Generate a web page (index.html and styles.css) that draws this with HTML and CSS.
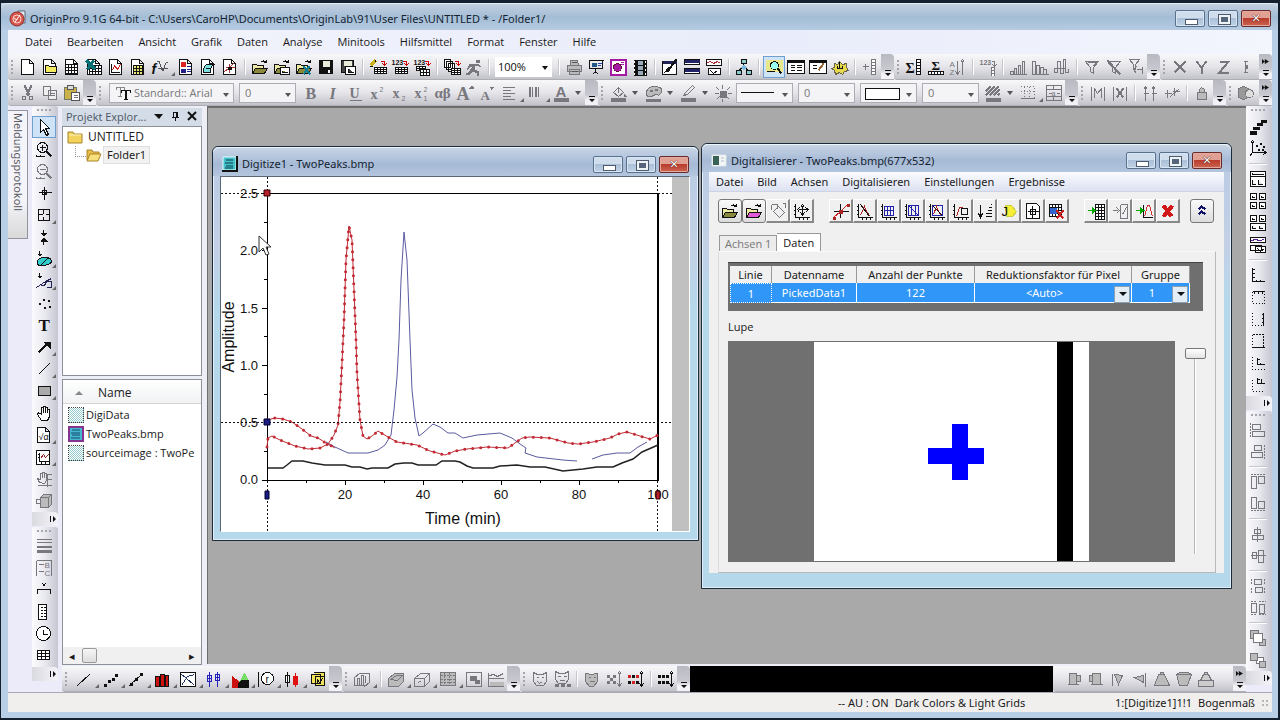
FILE: index.html
```html
<!DOCTYPE html>
<html lang="de">
<head>
    <meta charset="UTF-8">
    <meta name="viewport" content="width=device-width, initial-scale=1.0">
    <title>OriginPro 9.1G 64-bit</title>
    <link rel="stylesheet" href="styles.css">
</head>
<body>
<div class="app">
    <header class="titlebar">
        <svg class="app-logo" viewBox="0 0 17 17"><path d="M9 1h7v12h-7z" fill="#e8eef5" stroke="#567"/><circle cx="8" cy="9" r="7" fill="#d9574c" stroke="#8c2b28"/><circle cx="8" cy="9" r="4" fill="none" stroke="#f6d5cf"/><path d="M6 12L11 5M5 8l3 2" stroke="#fff" fill="none"/></svg>
        <h1>OriginPro 9.1G 64-bit - C:\Users\CaroHP\Documents\OriginLab\91\User Files\UNTITLED * - /Folder1/</h1>
        <div class="caption">
            <button class="min" aria-label="Minimieren"></button>
            <button class="max" aria-label="Maximieren"></button>
            <button class="close" aria-label="Schließen"></button>
        </div>
    </header>

    <nav class="menubar">
        <button>Datei</button><button>Bearbeiten</button><button>Ansicht</button><button>Grafik</button><button>Daten</button><button>Analyse</button><button>Minitools</button><button>Hilfsmittel</button><button>Format</button><button>Fenster</button><button>Hilfe</button>
    </nav>

    <div class="toolrow">
        <div class="toolbar">
            <span class="tools" data-tools="new newfolder book excel graph matrix func> layout notes chartpage | open opentpl openxl save savetpl | wizard import1 import2 | batch ~run |"></span>
            <label class="combo zoom"><select aria-label="Zoom"><option>100%</option></select></label>
            <span class="tools" data-tools="| ~print present slide film | brush stripes panes | tree | find! list edit gear | ~addcol"></span>
            <button class="endcap" aria-label="Weitere Schaltflächen"></button>
        </div>
        <div class="toolbar">
            <span class="tools" data-tools="sumcol sumrow ~sort | ~numcol | ~barsup ~bars ~barsmid | ~funnel ~funnelx ~funnelgo"></span>
            <button class="endcap" aria-label="Weitere Schaltflächen"></button>
        </div>
        <div class="toolbar grow">
            <span class="tools" data-tools="~setx ~sety ~setz ~err"></span>
            <button class="endcap more" aria-label="Weitere Schaltflächen"></button>
        </div>
    </div>

    <div class="toolrow">
        <div class="toolbar">
            <span class="tools" data-tools="~cut ~copy paste"></span>
            <button class="endcap" aria-label="Weitere Schaltflächen"></button>
        </div>
        <div class="toolbar">
            <label class="combo font"><svg class="tt" viewBox="0 0 18 18"><path d="M2 6V3h8v3M6 3v9M4 12h4" fill="none" stroke="#888"/><path d="M7 9V6h9v3M11 6v9M10 15h4M12 6v9" fill="none" stroke="#111"/></svg><select aria-label="Schriftart" disabled><option>Standard:: Arial</option></select></label>
            <label class="combo size"><select aria-label="Schriftgröße" disabled><option>0</option></select></label>
            <span class="tools" data-tools="~bold ~italic ~under ~sup ~sub ~supsub ~greek ~bigger ~smaller ~align> ~hatchv> ~fontcol v"></span>
            <button class="endcap" aria-label="Weitere Schaltflächen"></button>
        </div>
        <div class="toolbar">
            <span class="tools" data-tools="~fill v ~palette v ~linecol v ~light"></span>
            <label class="combo line"><select aria-label="Linienart" disabled><option label=" "></option></select></label>
            <label class="combo"><select aria-label="Linienbreite" disabled><option>0</option></select></label>
            <label class="combo box"><select aria-label="Füllung" disabled><option label=" "></option></select></label>
            <label class="combo last"><select aria-label="Musterbreite" disabled><option>0</option></select></label>
            <span class="tools" data-tools="~hatch v ~border> ~merge"></span>
            <button class="endcap" aria-label="Weitere Schaltflächen"></button>
        </div>
        <div class="toolbar">
            <span class="tools" data-tools="~mask ~unmask | ~spread ~swap | ~lock"></span>
            <button class="endcap" aria-label="Weitere Schaltflächen"></button>
        </div>
        <div class="toolbar grow">
            <span class="tools" data-tools="~cubefind"></span>
            <button class="endcap more" aria-label="Weitere Schaltflächen"></button>
        </div>
    </div>

    <div class="workspace">
        <div class="dock"><button>Meldungsprotokoll</button></div>
        <div class="side">
            <div class="toolbar vertical">
                <span class="tools" data-tools="pointer! zoomin ~zoomout cross reader> datasel maskrgn> baseline> dots text arrow> line> rect> hand eq> inset> ~pan ~rotate"></span>
                <button class="endcap" aria-label="Weitere Schaltflächen"></button>
            </div>
            <div class="toolbar vertical">
                <span class="tools" data-tools="~lines ~legend axisx colscale clock table"></span>
                <button class="endcap" aria-label="Weitere Schaltflächen"></button>
            </div>
        </div>

        <div class="center">
            <div class="content">
                <aside class="explorer">
                    <div class="panel-head">
                        <span>Projekt Explor...</span>
                        <button aria-label="Menü"><svg viewBox="0 0 10 10"><path d="M1 3h9l-4 5z"/></svg></button>
                        <button aria-label="Anheften"><svg viewBox="0 0 10 10"><path d="M3 1h5v5h1v1h-3v3h-1v-3h-3v-1h1zM4 2v4h2v-4z" fill-rule="evenodd"/></svg></button>
                        <button aria-label="Schließen"><svg viewBox="0 0 10 10"><path d="M1 1l8 8M9 1l-8 8" stroke="#111" stroke-width="2"/></svg></button>
                    </div>
                    <ul class="folders">
                        <li><svg viewBox="0 0 16 14"><path d="M1 2h5l1 2h8v9H1z" fill="#f3d35e" stroke="#a8842a"/><path d="M2 5h12" stroke="#fdf3b8"/></svg>UNTITLED</li>
                        <li class="child"><svg viewBox="0 0 16 14"><path d="M1 12V2h5l1 2h6v3" fill="#e9bd45" stroke="#a8842a"/><path d="M1 13l3-7h11l-3 7z" fill="#f8e17c" stroke="#a8842a"/></svg><span>Folder1</span></li>
                    </ul>
                    <div class="files">
                        <div class="files-head">Name</div>
                        <ul>
                            <li><i class="ghost"></i>DigiData</li>
                            <li><svg viewBox="0 0 16 16"><path d="M1 1h14v14H1z" fill="#47b6cf" stroke="#84338f" stroke-width="2"/><path d="M4 4h8M3 7h9M4 9h8M3 12h9" stroke="#124b70"/></svg>TwoPeaks.bmp</li>
                            <li><i class="ghost"></i>sourceimage : TwoPe</li>
                        </ul>
                        <div class="scroll"><button aria-label="Links">◂</button><i></i><button aria-label="Rechts">▸</button></div>
                    </div>
                </aside>

                <main class="mdi">
                    <section class="window plot-window">
                        <header>
                            <svg class="win-icon" viewBox="0 0 16 16"><path d="M1 1h13v13H1z" fill="#43bfc9" stroke="#dff"/><path d="M15 0v15H0" fill="none" stroke="#111" stroke-width="2"/><path d="M4 4h7M3 7h8M4 10h7M3 12h8" stroke="#07424f"/></svg>
                            <h2>Digitize1 - TwoPeaks.bmp</h2>
                            <div class="caption">
                                <button class="min" aria-label="Minimieren"></button>
                                <button class="max" aria-label="Maximieren"></button>
                                <button class="close" aria-label="Schließen"></button>
                            </div>
                        </header>
                        <div class="plot">
                            <svg viewBox="221 177 451 354">
                                <path class="axis" d="M267 193V481M266 193H659M266 480H659M262 250h5M262 308h5M262 365h5M262 480h5M262 193h5M264 222h3M264 279h3M264 336h3M264 394h3M264 451h3M345 480v5M423 480v5M501 480v5M579 480v5M306 480v3M384 480v3M462 480v3M540 480v3M618 480v3"/>
                                <path class="axis thick" d="M658 193v287"/>
                                <g class="ticks">
                                    <text x="258" y="198">2.5</text><text x="258" y="255">2.0</text><text x="258" y="313">1.5</text><text x="258" y="370">1.0</text><text x="258" y="427">0.5</text><text x="258" y="484">0.0</text>
                                </g>
                                <g class="ticks mid">
                                    <text x="345" y="499">20</text><text x="423" y="499">40</text><text x="501" y="499">60</text><text x="579" y="499">80</text><text x="658" y="499">100</text>
                                </g>
                                <text class="title" x="463" y="524">Time (min)</text>
                                <text class="title" transform="translate(234 337) rotate(-90)">Amplitude</text>
                                <path class="black" d="M268 468H283L287 465L292 461H303L312 463L325 465H345L352 467H360L367 469L372 468H388L395 464L404 463H412L418 465H436L442 461H455L460 462L467 466L473 468H493L500 466L517 465L530 467H545L563 471L583 469L597 467H613L622 463L633 459L642 452L658 445"/>
                                <path class="blue" d="M326 442L335 447L348 453H368L378 450L385 445L391 435L394 410L397 377L399 340L401 280L404 232L407 260L410 340L412 390L415 418L419 436L423 433L433 424L440 427L448 433H455L463 438L477 435L500 433L512 438L520 444L526 448L525 453L537 457L563 460L577 461M592 459L603 455L617 453H630L638 447L647 442"/>
                                <path class="red" id="red1" d="M267 420L275 418L283 419L292 422L302 429L311 436L318 438L326 443L335 448"/>
                                <path class="red" id="red2" d="M267 447L268 438L272 436L280 440L295 446L308 449L320 448L328 444L334 435L338 425L340 402L342 363L344 320L346 260L349 226L352 240L354 290L356 340L357 373L360 420L363 436L367 439L372 436L378 431L388 437L397 442L417 445L430 451L445 455L455 451L467 449L487 447L508 448L515 443L522 438L530 437L550 438L568 443L578 444L593 442L610 438L618 434L627 432L640 436L650 439L658 435"/>
                                <use href="#red1" class="beads"/><use href="#red2" class="beads"/>
                                <path class="guide" d="M221 193h50M221 422h451M658 193h14M267 177v16M267 481v50M657 177v16M657 481v50"/>
                                <path class="peg-r" d="M264 190h6v6h-6zM656 491h4v8h-4z"/>
                                <path class="peg-b" d="M264 419h6v6h-6zM265 491h4v8h-4z"/>
                            </svg>
                            <svg class="cursor" viewBox="0 0 14 22"><path d="M1 1v16l4-4 3 7 3-1-3-7h5z" fill="#fff" stroke="#333"/></svg>
                        </div>
                    </section>

                    <section class="window digitizer">
                        <header>
                            <svg class="win-icon" viewBox="0 0 16 16"><path d="M1 2h14v11H1z" fill="#f5f7f7" stroke="#dfe6e6"/><path d="M2 3h6v9H2z" fill="#3a6156"/><path d="M10 5h3M10 8h3" stroke="#abc"/></svg>
                            <h2>Digitalisierer - TwoPeaks.bmp(677x532)</h2>
                            <div class="caption">
                                <button class="min" aria-label="Minimieren"></button>
                                <button class="max" aria-label="Maximieren"></button>
                                <button class="close" aria-label="Schließen"></button>
                            </div>
                        </header>
                        <div class="dialog">
                            <nav class="dialog-menu"><button>Datei</button><button>Bild</button><button>Achsen</button><button>Digitalisieren</button><button>Einstellungen</button><button>Ergebnisse</button></nav>
                            <div class="dialog-tools">
                                <span class="tools" data-tools="open openpink ~turn move"></span>
                                <span class="tools" data-tools="pick auto1 auto2 auto3 auto4 auto5 sortpts lasso center deltable"></span>
                                <span class="tools" data-tools="totable ~tograph topeak delete"></span>
                                <span class="tools" data-tools="collapse"></span>
                            </div>
                            <div class="tabs"><button>Achsen 1</button><button class="active">Daten</button></div>
                            <div class="tabpage">
                                <div class="grid">
                                    <table>
                                        <colgroup><col class="c1"><col class="c2"><col class="c3"><col class="c4"><col class="c5"></colgroup>
                                        <thead><tr><th>Linie</th><th>Datenname</th><th>Anzahl der Punkte</th><th>Reduktionsfaktor für Pixel</th><th>Gruppe</th></tr></thead>
                                        <tbody><tr><td class="focus">1</td><td>PickedData1</td><td>122</td>
                                            <td><label class="cell"><select aria-label="Reduktionsfaktor"><option>&lt;Auto&gt;</option></select></label></td>
                                            <td><label class="cell"><select aria-label="Gruppe"><option>1</option></select></label></td></tr></tbody>
                                    </table>
                                </div>
                                <label class="lupe" for="zoomer">Lupe</label>
                                <div class="preview">
                                    <svg viewBox="728 341 447 221"><path fill="#707070" d="M728 341h447v221H728z"/><path fill="#fff" d="M814 342h275v219H814z"/><path d="M1057 342h16v219h-16z"/><path fill="#00f" d="M952 424h16v24h16v16h-16v16h-16v-16h-24v-16h24z"/></svg>
                                    <input type="range" id="zoomer" min="0" max="100" value="100">
                                </div>
                            </div>
                        </div>
                    </section>
                </main>
            </div>

            <div class="toolrow bottom">
                <div class="toolbar">
                    <span class="tools" data-tools="pline> pscatter> plinesym> pcol> pmulti> pbox> parea> ppolar> pstock> ptemplate"></span>
                    <button class="endcap" aria-label="Weitere Schaltflächen"></button>
                </div>
                <div class="toolbar">
                    <span class="tools" data-tools="~bar3d> | ~surf> ~wire> ~contour> ~image ~profile"></span>
                    <button class="endcap" aria-label="Weitere Schaltflächen"></button>
                </div>
                <div class="toolbar">
                    <span class="tools" data-tools="~face ~facegrid | ~shield ~masksw maskred | maskblack"></span>
                    <button class="endcap" aria-label="Weitere Schaltflächen"></button>
                </div>
                <div class="blackout"></div>
                <div class="toolbar nogrip">
                    <span class="tools" data-tools="~cup1 ~cup2 ~flagl ~flagr ~trap ~trapdown ~stamp"></span>
                    <button class="endcap more" aria-label="Weitere Schaltflächen"></button>
                </div>
            </div>
        </div>

        <div class="side right">
            <div class="toolbar vertical">
                <span class="tools" data-tools="plot3d scatter3d | panel1 panel4 panel4b layers | axl axt axr axbox axin axin2"></span>
                <button class="endcap" aria-label="Weitere Schaltflächen"></button>
            </div>
            <div class="toolbar vertical">
                <span class="tools" data-tools="~alleft ~alright | ~altop ~albottom | ~alvc ~alhc | ~samew ~sameh | ~front ~back"></span>
                <button class="endcap" aria-label="Weitere Schaltflächen"></button>
            </div>
        </div>
    </div>

    <footer class="status"><span class="mid">-- AU : ON</span><span>Dark Colors &amp; Light Grids</span><span class="last">1:[Digitize1]1!1</span><span>Bogenmaß</span><i></i></footer>
</div>

<script>
    // icons are drawn on an 18x18 canvas, whole numbers are pixel centres
    const p = (d, a = '') => `<path d="${d}" ${a}/>`;
    const f = (d, c = 'currentColor') => `<path d="${d}" fill="${c}" stroke="none"/>`;
    const s = (d, c) => `<path d="${d}" stroke="${c}"/>`;
    const t = (x, y, str, size, a = '') => `<text x="${x}" y="${y}" font-size="${size}" ${a}>${str}</text>`;
    const grid = (x, y, nx, ny, cw, ch, fill = '#fff') => {
        let d = `M${x} ${y}h${nx * cw}v${ny * ch}h${-nx * cw}z`;
        for (let i = 1; i < nx; i++) d += `M${x + i * cw} ${y}v${ny * ch}`;
        for (let i = 1; i < ny; i++) d += `M${x} ${y + i * ch}h${nx * cw}`;
        return p(d, `fill="${fill}"`);
    };
    const page = p('M2 1h8l4 4v11h-12zM10 1v4h4', 'fill="#fff"');
    const folder = c => p('M1 15v-9h4l1 1h6v3', 'fill="#efe9a6"') + p('M1 15l3-5h12l-3 5z', `fill="${c}"`);
    const hop = p('M9 4q3-3 6 0M15 1v3h-3');
    const redArrow = s('M11 3h4v4M13 5l2 2l2-2', '#c00');
    const nums = t(0, 6, '123', 7, 'font-weight="bold"');
    const axes = p('M2 1v14h14M0 4h2M0 8h2M0 12h2M6 15v2M10 15v2M14 15v2');
    const greenArrow = s('M0 8h5', '#0a0') + f('M4 4l5 4l-5 4z', '#0a0');
    const lens = '<circle cx="7" cy="7" r="5"/>' + p('M11 11l5 5', 'stroke-width="2"') + p('M4 7h6');

    const icons = {
        new: page,
        newfolder: page + p('M4 13v-6h3l1 1h7v6h-11z', 'fill="#f4ec60"'),
        book: page + grid(2, 6, 4, 3, 3, 3),
        excel: page + grid(4, 7, 4, 3, 3, 3) + p('M1 2l9 9M8 2l-6 9', 'stroke="#0b6f78" stroke-width="3"'),
        graph: page + p('M4 5v9h8') + s('M5 12l2-5l3 4l3-5', '#c22'),
        matrix: page + grid(4, 7, 3, 3, 3, 3, '#e8e87a'),
        func: t(0, 15, 'f', 14, 'font-weight="bold" font-style="italic"') + s('M5 3l3 0q3 14 5 6q1-6 4-5M6 10h10', '#555'),
        layout: page + f('M3 3h5v5h-5z', '#d22') + f('M3 10h5v4h-5z', '#228') + s('M9 8h4M9 11h4M9 13h4', '#228'),
        notes: page + p('M4 12q1-6 4-6h7q-4 0-4 8h-7z', 'fill="#7fe0e0"') + p('M6 10h5'),
        chartpage: page + s('M3 13l4-3l5-5M4 9h9M8 5v9', '#a33') + f('M6 8h4v3h-4z'),
        open: folder('#8b8a3c') + hop,
        opentpl: folder('#8b8a3c') + hop + p('M7 9h9v7h-9zM9 12v2h5', 'fill="#fff"'),
        openxl: folder('#8b8a3c') + hop + p('M8 8l7 8M14 8l-6 8', 'stroke="#0b7f98" stroke-width="2"'),
        save: p('M2 2h13v13h-13z', 'fill="#111"') + f('M5 2h7v6h-7z', '#e8ecd8') + f('M10 11h2v3h-2z', '#fff'),
        savetpl: p('M2 2h12v12h-12z', 'fill="#444"') + f('M4 2h8v5h-8z', '#e8ecd8') + p('M6 8h10v8h-10zM9 10v4h5', 'fill="#fff"'),
        wizard: p('M1 7l5-5', 'stroke="#c9b21c" stroke-width="3"') + p('M0 8h3M6 1v2') + redArrow + grid(5, 9, 4, 3, 3, 2),
        import1: nums + redArrow + grid(4, 9, 4, 3, 3, 2),
        import2: nums + redArrow + grid(3, 8, 3, 2, 3, 2) + grid(7, 11, 3, 2, 3, 3),
        batch: p('M1 1h6v8h-6zM3 3h6v8h-6zM5 5h6v8h-6z', 'fill="#fff"') + redArrow + grid(8, 10, 3, 3, 3, 2),
        run: f('M10 1h4v3h-4zM4 5h8l4 3h-3l-3-1l-1 4l4 2v5h-2v-3l-4-2l-3 3h-4v-2h3l4-6h-2l-2 3h-2z'),
        print: p('M5 7v-5h7l1 5M2 7h14v6h-14zM4 11h10v5h-10z', 'fill="#bbb"') + s('M6 13h6M6 4h5', '#555'),
        present: p('M1 2h15M2 2v8h13v-8M8 10v4M5 16l3-3l3 3') + f('M4 4h5v4h-5z', '#258') + s('M10 5h4M10 7h3', '#24a'),
        slide: p('M1 1h15v15h-15z', 'fill="#fff" stroke="#a31aa3" stroke-width="2"') + '<circle cx="8" cy="9" r="4" fill="#a31aa3" stroke="#613"/>' + s('M11 4h3M11 6h3', '#a31aa3'),
        film: f('M2 1h13v16h-13z') + f('M6 2h5v4h-5zM6 7h5v4h-5zM6 12h5v4h-5z', '#9ab') + p('M3 2v15M14 2v15', 'stroke="#fff" stroke-dasharray="2 2"'),
        brush: p('M1 3h14v13h-14z', 'fill="#fff"') + f('M1 2h14v3h-14z', '#225') + p('M15 1l-6 8', 'stroke-width="2"') + f('M10 8l-2 5l-5 1l3-5z'),
        stripes: p('M1 1h15v5h-15zM1 10h15v5h-15z', 'fill="#fff"') + f('M1 1h15v3h-15zM1 10h15v3h-15z', '#226'),
        panes: p('M1 1h15v6h-15zM3 10h12v6h-12z', 'fill="#fff"') + s('M2 4l3-1l3 2l4-2l3 2', '#a33') + p('M5 12l3 3l4-3'),
        tree: p('M8 5v3M8 8l-5 4M8 8l5 4M6 1h5v4h-5zM1 12h5v4h-5zM11 12h5v4h-5z', 'fill="#8cc"') + f('M8 6l3 3l-3 3l-3-3z', '#7bd'),
        find: p('M0 1h17v12h-17z', 'fill="#e8e88a" stroke="none"') + '<circle cx="9" cy="7" r="4" fill="#9fe"/>' + p('M12 10l4 5', 'stroke-width="2"') + p('M1 13h8'),
        list: p('M0 2h17v13h-17z', 'fill="#fff"') + f('M0 1h17v3h-17z') + p('M3 7h4M9 7h5M3 9h4M9 9h5M3 12h4M9 12h5'),
        edit: p('M0 2h17v13h-17z', 'fill="#fff"') + f('M0 1h17v3h-17z') + p('M3 7h4M3 10h4') + p('M14 5l-5 7', 'stroke="#963" stroke-width="2"'),
        gear: p('M3 5l3 1l2-3l3 3l4-1v4l2 3l-4 1l-2 3l-3-2l-4 2l-1-4l-3-2l3-1z', 'fill="#e6d84a" stroke="#664"') + p('M8 3v7M6 7v3h5v-3'),
        addcol: p('M1 8h6M4 5v6') + grid(10, 1, 1, 5, 4, 3),
        sumcol: t(0, 14, 'Σ', 14, 'font-weight="bold" class="serif"') + grid(11, 1, 1, 5, 4, 3),
        sumrow: t(4, 11, 'Σ', 13, 'font-weight="bold" class="serif"') + grid(1, 13, 5, 1, 3, 3),
        sort: t(0, 8, 'A', 8) + t(0, 16, 'Z', 8) + p('M8 2v13M6 13l2 3l2-3M13 16v-14M11 4l2-3l2 3'),
        numcol: nums + p('M12 3h3v4M13 6l2 2l2-2') + grid(12, 9, 1, 3, 3, 3),
        barsup: p('M1 16h3v-3h-3zM5 16v-6h2v6M9 16v-9h2v9M13 16v-13h2v13M0 16h17'),
        bars: p('M1 16v-13h3v13M5 16v-9h3v9M9 16v-7h3v7M12 16v-5h3v5M0 16h17'),
        barsmid: p('M1 10v4h3v-4zM4 10v-7h3v7zM7 10v5h3v-5zM10 10v-9h2v9zM12 10v4h3v-4'),
        funnel: p('M2 3h13l-5 6v6l-3-2v-4zM4 4h9l-4 4'),
        funnelx: p('M2 3h13l-5 6v6l-3-2v-4z') + p('M2 2l13 14', 'stroke-width="2"'),
        funnelgo: p('M2 1h10l-4 5v5l-2-1v-4zM9 11h6M15 8v7M9 8l-3 3l3 4'),
        setx: p('M3 3l11 11M14 3l-11 11', 'stroke-width="2"'),
        sety: p('M3 3l5 6l5-6M8 9v6', 'stroke-width="2"'),
        setz: p('M4 3h9l-9 11h9', 'stroke-width="2"'),
        err: p('M6 3h4M8 3v11M6 14h4') + f('M7 6h3v4h-3z'),
        cut: p('M5 1l5 10M12 1l-5 10', 'stroke-width="2"') + p('M3 12h3v3h-3zM10 12h3v3h-3z'),
        copy: p('M2 2h7v9h-7zM7 6h8v9h-8z', 'fill="#eee"') + p('M9 9h4M9 11h4'),
        paste: p('M1 3h12v12h-12z', 'fill="#c9b24a" stroke="#776"') + p('M4 1h6v4h-6z', 'fill="#ddd" stroke="#555"') + p('M8 8h8v8h-8z', 'fill="#fff" stroke="#555"') + s('M10 11h4M10 13h4', '#777'),
        bold: t(3, 14, 'B', 16, 'font-weight="bold" class="serif"'),
        italic: t(5, 14, 'I', 16, 'font-weight="bold" font-style="italic" class="serif"'),
        under: t(3, 13, 'U', 14, 'font-weight="bold" class="serif"') + p('M3 16h12'),
        sup: t(2, 14, 'x', 14, 'font-weight="bold" class="serif"') + t(11, 7, '2', 7),
        sub: t(2, 13, 'x', 14, 'font-weight="bold" class="serif"') + t(11, 16, '2', 7),
        supsub: t(2, 13, 'x', 14, 'font-weight="bold" class="serif"') + t(11, 7, '2', 7) + t(11, 16, '1', 7),
        greek: t(0, 13, 'αβ', 15, 'font-weight="bold" class="serif"'),
        bigger: t(0, 15, 'A', 18, 'font-weight="bold" class="serif"') + f('M12 4l3-3l3 3z'),
        smaller: t(2, 15, 'A', 13, 'font-weight="bold" class="serif"') + f('M11 2h5l-3 3z'),
        align: p('M2 3h12M2 6h8M2 9h12M2 12h8M2 15h12'),
        hatchv: p('M3 2v10M6 2v10M9 2v10M12 2v10') + p('M4 2v10M10 2v10'),
        fontcol: t(3, 12, 'A', 15, 'font-weight="bold"') + f('M1 13h15v4h-15z'),
        fill: p('M4 8l5-5l5 5l-5 4zM9 3v5') + f('M14 8l3 4h-3zM1 13h15v4h-15z'),
        palette: p('M2 9q0-7 8-7t7 5t-6 3l-4 2q-5 1-5-3z', 'fill="#bbb"') + f('M5 5h3v2h-3zM10 4h3v2h-3zM1 14h15v3h-15z'),
        linecol: p('M4 11l2-3l7-7l2 2l-7 7z') + f('M1 13h15v4h-15z'),
        light: f('M5 6h7v7h-7z') + p('M8 0v4M8 14v3M0 9h4M13 9h4M2 3l3 3M15 3l-3 3M2 15l3-3M15 15l-3-3'),
        hatch: p('M1 11l9-9M1 7l5-5M5 11l9-9M9 11l6-6M13 11l2-2', 'stroke-width="2"') + f('M1 13h15v4h-15z'),
        border: p('M1 2h14v11M5 2v11M10 2v11M1 7h13', 'stroke-dasharray="1 2"') + p('M1 14h14'),
        merge: p('M1 1h15v15h-15zM1 5h15M1 12h15M8 1v4M8 12v4M3 9h3M11 9h3') + t(6, 11, 'a', 7),
        mask: p('M2 2v14M15 2v14M5 13v-9l3 5l4-5v9'),
        unmask: p('M2 2v14M15 2v14') + p('M5 4l7 9M12 4l-7 9', 'stroke-width="2"'),
        spread: p('M4 2v14M12 2v14M2 9h5M10 9h5M2 5l2-3l2 3M10 5l2-3l2 3'),
        swap: p('M1 9h7M9 7h7M4 5v8M11 3v8M7 12l9-8'),
        lock: p('M4 8h9v7h-9zM6 8v-3l2-2l3 2v3', 'fill="#bbb"'),
        cubefind: p('M1 4l5-2l5 2v9l-5 2l-5-2z', 'fill="#999"') + '<circle cx="12" cy="9" r="4" fill="#ddd"/>',

        pointer: p('M5 1v13l3-3l3 6l2-1l-3-6h4z', 'fill="#fff"'),
        zoomin: lens + p('M7 4v6M1 16h8M1 14v2M5 14v2'),
        zoomout: lens + p('M1 16h8M1 14v2M5 14v2'),
        cross: p('M9 2v13M3 8h13M7 6h4v4h-4z') + p('M8 8h2', 'stroke-width="2"'),
        reader: p('M3 3h11v11h-11zM8 3v4M8 10v4M3 8h4M10 8h4'),
        datasel: p('M8 1v5M8 11v5') + f('M5 4h7l-4 4zM5 13h7l-4-4z'),
        maskrgn: p('M4 0v4') + f('M1 3h6l-3 3z') + p('M2 11q1-4 7-4t7 3t-7 5t-7-4z', 'fill="#3cc"') + p('M5 15l8-8'),
        baseline: p('M4 0v4') + f('M1 3h6l-3 3z') + s('M1 15l9-6l6-3M5 13h4l2-4M11 9h5v6h-5', '#225'),
        dots: f('M3 8h2v2h-2zM7 4h2v2h-2zM12 5h2v2h-2zM8 12h2v2h-2zM13 11h2v2h-2z'),
        text: t(3, 14, 'T', 17, 'font-weight="bold" class="serif"'),
        arrow: p('M3 14l8-8', 'stroke-width="2"') + f('M7 3h8v8z'),
        line: p('M3 14l11-11', 'stroke-width="1"'),
        rect: p('M3 4h12v9h-12z', 'fill="#aaa"'),
        hand: p('M6 16l-4-6l1-2l3 2v-7h2v5v-6h2v6v-5h2v5v-3h2v7l-2 4z', 'fill="#fff"'),
        eq: page + t(3, 13, '√α', 9, 'fill="#922"'),
        inset: p('M1 2h13v14h-13z', 'fill="#fff"') + p('M4 4v9h9M2 6h2M2 9h2M6 13v2M10 13v2') + s('M5 10l3-4l2 3l3-3', '#922'),
        pan: p('M4 12l-2-4l3 1v-6l2 0v4v-5h2v5v-4h2v7l-2 3zM12 3v13M12 4h4M12 9h4M2 15h14'),
        rotate: p('M5 5l3-3h8v10l-3 3h-8zM5 5h8v10M13 5l3-3', 'fill="#bbb"') + p('M4 7h-3v4h3'),
        lines: p('M1 2h15M1 5h15') + p('M1 9h15', 'stroke-width="2"') + p('M1 14h15', 'stroke-width="3"'),
        legend: p('M1 1h15v15M1 1v15M3 5h5M3 12h5') + t(9, 8, 'B', 8) + t(9, 16, 'C', 8),
        axisx: p('M2 12v-4h13v4M7 2l3 3M10 2l-3 3'),
        colscale: p('M3 1h8v15h-8zM5 4h2M5 7h2M5 10h2M5 13h2M8 4h2M8 7h2M8 10h2M8 13h2', 'fill="#fff"'),
        clock: '<circle cx="8" cy="8" r="7" fill="#fff"/>' + p('M8 4v5h4'),
        table: grid(2, 3, 3, 3, 4, 3),

        openpink: folder('#e05ad8') + hop,
        turn: p('M4 9l5-5l6 6l-5 5zM2 2h6v4M2 2v5M13 1h3v4'),
        move: axes + p('M9 3v9M5 7h9M7 5l2-3l2 3M7 10l2 3l2-3M6 5l-2 2l2 3M12 5l3 2l-3 3'),
        pick: p('M1 9h15M8 1v14') + s('M1 15l7-6l7-7', '#c22') + f('M0 14h3v3h-3zM14 1h3v3h-3zM6 7h4v4h-4z', '#a22'),
        auto1: axes + s('M4 2l10 12M4 13l4-9l4 9', '#a22') + p('M4 2l9 12'),
        auto2: axes + p('M4 4h9v9h-9zM7 4v9M10 4v9M4 8h9', 'stroke="#22a"'),
        auto3: axes + p('M4 3h10v10h-10zM4 3l10 10M7 3v10M11 3v10', 'stroke="#22a"'),
        auto4: axes + p('M4 3h10v10h-10z', 'stroke="#22a"') + s('M5 12l3-8l4 9', '#a22') + p('M4 3l10 10'),
        auto5: axes + s('M4 14l3-9l3 0', '#a22') + p('M9 6h6v6h-6z'),
        sortpts: p('M4 2v12M2 11l2 4l2-4M9 14h6M9 11h6M11 8h4M12 5h3M14 2h1'),
        lasso: p('M5 3h6l5 6l-4 5h-6z', 'fill="#f5ef35" stroke="#cc4"') + t(1, 13, 'J', 13),
        center: p('M2 1h10l3 3v12h-13z', 'fill="#fff"') + p('M8 3v12M3 9h11M6 7h5v5h-5z'),
        deltable: grid(1, 2, 4, 4, 3, 3, '#fff') + f('M1 5h7v6h-7z', '#36c') + p('M8 8l7 8M15 8l-7 8', 'stroke="#c22" stroke-width="2"'),
        totable: grid(8, 2, 3, 5, 3, 3) + greenArrow,
        tograph: p('M1 8h5M5 5l3 3l-3 3M9 2v14h7M9 2h7v14M11 12l4-7'),
        topeak: p('M8 2v13h9') + s('M9 14l3-11h2l3 11', '#c33') + greenArrow,
        delete: p('M4 3l8 11M13 3l-9 11', 'stroke="#d01818" stroke-width="4"'),
        collapse: p('M5 7l3-3l4 3M5 12l3-3l4 3', 'stroke="#116" stroke-width="2"'),

        pline: p('M2 15l13-12'),
        pscatter: f('M2 13h3v3h-3zM6 9h3v3h-3zM10 7h3v3h-3zM13 3h3v3h-3z'),
        plinesym: p('M2 15l13-12') + f('M2 12h3v3h-3zM7 7h3v3h-3zM12 2h3v3h-3z'),
        pcol: p('M2 16v-10h4v10zM7 16v-12h4v12zM12 16v-11h3v11z', 'fill="#c11"'),
        pmulti: p('M1 2h15v14h-15z', 'fill="#fff"') + s('M2 4l4 3l9 8M2 15l6-9l7-2', '#236'),
        pbox: p('M4 1v15M12 1v15M2 5h4v6h-4zM10 4h4v6h-4zM2 8h4M10 7h4', 'stroke="#22b"'),
        parea: f('M0 5l8 6v6h-8z', '#c11') + f('M8 11l5-9l4 8v3z', '#7d6') + f('M6 13l5-4l6 1v7h-11z', '#111'),
        ppolar: p('M1 1v15') + '<circle cx="10" cy="8" r="6" fill="#fff"/>' + t(8, 12, 'r', 10),
        pstock: p('M4 1v15M2 5h4v7h-4z', 'fill="#fff"') + p('M12 2v14M10 6h4v8h-4z', 'stroke="#d11" fill="#d11"'),
        ptemplate: p('M2 4h9v9h-9zM4 2h11v10M6 6h9v9h-9z', 'fill="#f1e25a"') + p('M8 13v-4l2 3l3-4'),
        bar3d: p('M1 7l5-4h10v9l-5 4M1 7v8h10M4 15v-7h2v7M8 14v-9h2v9M12 12v-7'),
        surf: p('M1 8l6-5h9v8l-5 5h-10zM3 9l6-4h6l-5 5z', 'fill="#bbb"'),
        wire: p('M1 8l6-5h9v8l-5 5h-10zM1 8h10v8M11 8l5-5M5 12l3-2'),
        contour: p('M1 2h15v13h-15z', 'fill="#bbb"') + p('M1 5h15M1 9h15M1 12h15M5 2v13M10 2v13', 'stroke-dasharray="2 1"'),
        image: p('M1 2h15v14h-15z') + f('M4 5h7v5h-7zM9 9h5v4h-5z'),
        profile: p('M1 2v14h15M1 8h15M2 5l4-1l4 2l6-3') + f('M2 11h14v4h-14z', '#bbb'),
        face: p('M2 2l4 2h5l4-2v9l-3 4h-7l-3-4zM5 7h2M10 7h2M6 11l2 2l3-2'),
        facegrid: p('M2 1l4 2h5l4-2v8l-3 4h-7l-3-4zM4 6h3M10 6h3M6 10h5') + f('M1 13h4v3h-4zM7 13h4v3h-4zM13 13h4v3h-4z'),
        shield: p('M2 3l6 1l6-1v8l-4 5h-4l-4-5zM5 7h2M10 7h2M6 11h5', 'fill="#bbb"'),
        masksw: f('M1 4h3v3h-3zM7 4h3v3h-3zM1 10h3v3h-3zM7 10h3v3h-3zM4 7h3v3h-3z') + p('M14 2v13M12 4l2-3l2 3M12 13l2 3l2-3'),
        maskred: f('M0 4h3v3h-3zM4 10h3v3h-3zM8 4h3v3h-3z', '#c22') + f('M4 4h3v3h-3zM0 10h3v3h-3zM8 10h3v3h-3z') + p('M14 2v13M12 4l2-3l2 3M12 13l2 3l2-3'),
        maskblack: f('M0 4h3v3h-3zM4 10h3v3h-3zM8 4h3v3h-3zM4 4h3v3h-3zM0 10h3v3h-3zM8 10h3v3h-3z') + p('M14 2v13M12 4l2-3l2 3M12 13l2 3l2-3'),
        cup1: p('M4 3h7v11h-7zM11 5h4v6h-4M2 14h11', 'fill="#bbb"'),
        cup2: p('M5 3h8v11h-8zM5 5h-3v6h3M3 14h12', 'fill="#bbb"'),
        flagl: p('M3 3v12M5 4l8 1l-4 9z', 'fill="#bbb"'),
        flagr: p('M14 2v14M12 5l-9 2l9 5z', 'fill="#bbb"'),
        trap: p('M5 4h6l5 11h-15zM7 4v-2h3v2', 'fill="#bbb"'),
        trapdown: p('M1 4h15l-4 11h-8zM1 4l3-2h9l3 2', 'fill="#bbb"'),
        stamp: p('M1 10h15v6h-15zM3 10l3-6h5l3 6M7 4v-2h3v2', 'fill="#ccc"'),

        plot3d: f('M0 12h7v4h-7zM3 8h7v3h-7zM7 4h6v3h-6zM11 1h6v3h-6z'),
        scatter3d: p('M3 1v11h13M3 12l-3 4M1 3l2-3l2 3M14 10l3 2l-3 2') + f('M6 4h2v2h-2zM10 2h2v2h-2zM13 5h2v2h-2zM8 8h2v2h-2zM12 8h2v2h-2z'),
        panel1: p('M1 1h15v15h-15zM1 6h15M3 2v2h11M3 9v5h3M9 9v5h4', 'fill="#fff"'),
        panel4: p('M1 1h6v6h-6zM10 1h6v6h-6zM1 10h6v6h-6zM10 10h6v6h-6zM3 3v2h2M12 3v2h2M3 12v2h2M12 12v2h2', 'fill="#fff"'),
        panel4b: p('M1 1h6v6h-6zM10 1h6v6h-6zM1 9h15v7h-15zM3 3v2h2M12 3v2h2M3 11v3h3M10 11v3h3', 'fill="#fff"'),
        layers: p('M1 1h15v5h-15zM1 9h11v5h-11zM6 10h10v6h-10z', 'fill="#fff"') + s('M2 4l4-1l4 1l5-1', '#529') + p('M8 12l3 3l4-3'),
        axl: p('M3 1v14h12M3 3h2M3 7h2M3 11h2M7 15v-2M11 15v-2'),
        axt: p('M3 3h12M5 3v2M9 3v2M13 3v2') + p('M3 3v12h12v-12', 'stroke-dasharray="1 2"'),
        axr: p('M14 2v13M12 4h2M12 8h2M12 12h2') + p('M3 2v13h11', 'stroke-dasharray="1 2"'),
        axbox: p('M3 2h11v13h-11', 'stroke-dasharray="2 1"') + p('M3 2v13h12', 'stroke-dasharray="1 2"'),
        axin: p('M8 3v7h7M8 5h2M11 10v-2') + p('M3 2v13h12', 'stroke-dasharray="1 2"'),
        axin2: p('M8 1v6h7M12 2v5M8 3h2') + p('M3 3v12h12', 'stroke-dasharray="1 2"'),
        alleft: p('M1 1v15', 'stroke-dasharray="2 1"') + p('M3 3h8v5h-8zM3 10h12v5h-12z'),
        alright: p('M15 1v15', 'stroke-dasharray="2 1"') + p('M5 2h7v5h-7zM2 9h11v5h-11z'),
        altop: p('M1 1h15', 'stroke-dasharray="2 1"') + p('M2 3h5v12h-5zM9 3h6v7h-6z'),
        albottom: p('M1 15h15', 'stroke-dasharray="2 1"') + p('M2 2h5v11h-5zM9 6h6v7h-6z'),
        alvc: p('M8 1v15M5 4h6v4h-6zM3 10h11v4h-11z'),
        alhc: p('M1 8h15M3 5h4v6h-4zM9 3h5v12h-5z'),
        samew: p('M2 1v6M15 1v6M2 10v6M15 10v6', 'stroke-dasharray="2 1"') + p('M5 2h7v5h-7zM6 10h7v5h-7z'),
        sameh: p('M1 2h6M9 2h7M1 15h6M9 15h7', 'stroke-dasharray="2 1"') + p('M2 4h5v9h-5zM10 5h5v9h-5z'),
        front: p('M1 1h8v8h-8zM10 10h6v6h-6z', 'fill="#bbb"') + p('M4 4h9v9h-9z', 'fill="#fff"'),
        back: p('M7 6h7v6h-7z', 'fill="#fff"') + p('M1 2h7v7h-7zM10 10h6v6h-6z', 'fill="#bbb"')
    };

    document.querySelectorAll('[data-tools]').forEach(box => {
        box.innerHTML = box.dataset.tools.trim().split(/\s+/).map(item => {
            if (item === '|') return '<i class="sep"></i>';
            if (item === 'v') return '<button class="arrow" aria-label="Auswahl" disabled></button>';
            const name = item.replace(/[~>!]/g, '');
            const cls = 'tool' + (item.includes('>') ? ' drop' : '') + (item.includes('!') ? ' on' : '');
            return `<button class="${cls}" aria-label="${name}"${item[0] === '~' ? ' disabled' : ''}><svg viewBox="-0.5 -0.5 18 18">${icons[name]}</svg></button>`;
        }).join('');
    });
</script>
</body>
</html>
```
FILE: styles.css
```css
* {
    box-sizing: border-box;
}
body {
    margin: 0;
    height: 100vh;
    overflow: hidden;
    font-family: "Open Sans", "Noto Sans", sans-serif;
    font-size: 11px;
    line-height: 16px;
    color: #1a1a1a;
}
h1, h2, ul {
    margin: 0;
    padding: 0;
    list-style: none;
    font-size: 11px;
    font-weight: normal;
}
h1, h2, .grid table, .status, .dock, .child, .dialog-menu {
    font-family: "Noto Sans", sans-serif;
}
button, select, input {
    font: inherit;
    color: inherit;
    margin: 0;
    padding: 0;
    border: none;
    background: none;
}
.app {
    display: flex;
    flex-direction: column;
    height: 100vh;
    padding: 0 6px 6px 7px;
    background: #b9cfe6;
    border: solid #15202e;
    border-width: 3px 2px 2px 1px;
}

/* title bars */
.titlebar {
    display: flex;
    align-items: center;
    gap: 4px;
    height: 27px;
    margin: 0 -6px 0 -7px;
    padding: 3px 7px 0 8px;
    border-top: 1px solid #e4edf7;
    border-radius: 6px 6px 0 0;
    background: linear-gradient(#c3cfdf, #a3bdd6 50%, #b5cbe2);
}
.titlebar h1 {
    flex: 1;
    color: #151f30;
}
.app-logo {
    width: 17px;
    height: 17px;
}
.caption {
    display: flex;
    gap: 3px;
}
.caption button {
    position: relative;
    width: 30px;
    height: 17px;
    border: 1px solid #59708e;
    border-radius: 2px;
    background: linear-gradient(#cfdded 45%, #abc0d8 50%, #bfd2e6);
    box-shadow: inset 0 0 0 1px #d8e5f2;
}
.caption .close {
    border-color: #6b2a2a;
    background: linear-gradient(#e0a094 45%, #b93c2d 50%, #cc6652);
    box-shadow: inset 0 0 0 1px #e3aaa0;
}
.caption button::before {
    content: "";
    position: absolute;
    background: #fff;
    border: 1px solid #4e5b6d;
}
.caption .min::before {
    left: 9px;
    top: 8px;
    width: 11px;
    height: 4px;
}
.caption .max::before {
    left: 9px;
    top: 3px;
    width: 11px;
    height: 9px;
    background: #56657a;
    box-shadow: inset 0 0 0 2px #eef3f8;
}
.caption .close::before {
    content: "✕";
    inset: 0;
    border: none;
    background: none;
    color: #fff;
    font: bold 11px/15px "DejaVu Sans", sans-serif;
    text-shadow: 0 0 1px #401010, 0 0 1px #401010;
}

/* menu and toolbars */
.menubar {
    display: flex;
    gap: 15px;
    height: 24px;
    padding: 0 0 0 17px;
    background: linear-gradient(90deg, #f3f4fc, #e9ecfa 60%, #f3f6fd);
}
.toolrow {
    display: flex;
    height: 26px;
    background: #f0f1f7;
}
.toolbar {
    display: flex;
    align-items: center;
    height: 26px;
    padding-left: 9px;
    position: relative;
    background: linear-gradient(#f8f8fa, #e5e5ea 50%, #c3c3ca);
    border-bottom: 1px solid #aeaeb6;
    border-radius: 3px 0 0 3px;
}
.toolbar::before {
    content: "";
    position: absolute;
    left: 3px;
    top: 6px;
    width: 2px;
    height: 14px;
    background: repeating-linear-gradient(#a5a5ae 0 2px, transparent 2px 4px);
}
.toolbar.grow {
    flex: 1;
}
.toolbar.nogrip::before {
    display: none;
}
.tools {
    display: flex;
    align-items: center;
}
.tool {
    position: relative;
    flex: none;
    display: flex;
    align-items: center;
    justify-content: center;
    width: 22px;
    height: 22px;
    color: #111;
}
.tool:disabled {
    color: #77777d;
}
.tool svg {
    width: 18px;
    height: 18px;
    fill: none;
    stroke: currentColor;
    shape-rendering: crispEdges;
}
.tool text {
    stroke: none;
    fill: currentColor;
    font-family: "Liberation Sans", sans-serif;
}
.tool .serif {
    font-family: "Liberation Serif", serif;
}
.tool.drop {
    width: 26px;
    padding-right: 4px;
}
.tool.drop::after {
    content: "";
    position: absolute;
    right: 0;
    bottom: 2px;
    border: solid transparent;
    border-width: 2px;
    border-right-color: #666;
    border-bottom-color: #666;
}
.tool.on {
    border: 1px solid #6f9ed0;
    background: #cfe3f7;
}
.sep {
    width: 8px;
    height: 16px;
    background: linear-gradient(90deg, transparent 3px, #c6c6ce 3px 4px, #fff 4px 5px, transparent 5px);
}
.arrow {
    width: 13px;
    height: 22px;
    position: relative;
}
.arrow::after, .combo::after {
    content: "";
    position: absolute;
    right: 4px;
    top: 9px;
    border: 3px solid transparent;
    border-top: 4px solid #555;
    border-bottom: none;
}
.endcap {
    position: relative;
    align-self: stretch;
    width: 13px;
    margin-left: auto;
    border-radius: 0 4px 0 0;
    background: linear-gradient(#b9b9c2, #c8c8d0 60%, #f2f2f6 80%);
}
.endcap::after {
    content: "";
    position: absolute;
    left: 4px;
    bottom: 3px;
    width: 6px;
    height: 6px;
    background: #111;
    clip-path: polygon(0 0, 100% 0, 100% 1px, 0 1px, 0 3px, 100% 3px, 50% 100%, 0 3px);
}
.endcap.more::before {
    content: "";
    position: absolute;
    left: 3px;
    top: 5px;
    width: 7px;
    height: 5px;
    background: #111;
    clip-path: polygon(0 0, 40% 50%, 40% 0, 100% 50%, 40% 100%, 40% 50%, 0 100%);
}
.combo {
    position: relative;
    display: flex;
    align-items: center;
    width: 57px;
    height: 20px;
    margin-right: 5px;
    border: 1px solid #acacb4;
    background: #f4f4f6;
}
.combo select {
    flex: 1;
    min-width: 0;
    width: 100%;
    height: 18px;
    padding: 0 12px 0 5px;
    appearance: none;
    opacity: 1;
    color: #777;
}
.combo.zoom {
    margin: 0 3px 0 2px;
    border: none;
    background: #fff;
}
.combo.zoom select {
    color: #111;
    padding-left: 3px;
}
.combo.zoom::after {
    border-top-color: #111;
}
.combo.font {
    width: 125px;
    margin-left: 4px;
}
.combo.size {
    margin-right: 4px;
}
.combo.line {
    margin-left: 2px;
}
.combo.last {
    margin-right: 3px;
}
.combo .tt {
    flex: none;
    width: 18px;
    height: 18px;
    margin-left: 4px;
    shape-rendering: crispEdges;
}
.combo.font select {
    padding: 0 0 0 2px;
}
.line::before, .box::before {
    content: "";
    position: absolute;
    left: 4px;
    top: 8px;
    width: 33px;
    height: 1px;
    background: #111;
}
.box::before {
    top: 4px;
    height: 10px;
    border: 1px solid #111;
    background: #fff;
}

/* side columns */
.workspace {
    flex: 1;
    display: flex;
    min-height: 0;
    background: #ebebfa;
}
.dock {
    width: 24px;
    padding-top: 4px;
}
.dock button {
    writing-mode: vertical-rl;
    height: 129px;
    width: 20px;
    padding-top: 2px;
    text-align: left;
    border: 1px solid #94949c;
    border-left: none;
    background: linear-gradient(#f4f4fa 70%, #d9d9d9);
    color: #5a5a62;
}
.side {
    display: flex;
    flex-direction: column;
    gap: 1px;
    width: 29px;
}
.side.right {
    width: 26px;
}
.toolbar.vertical {
    flex-direction: column;
    align-items: flex-start;
    width: 26px;
    height: auto;
    padding: 10px 0 0 0;
    border: none;
    border-radius: 3px 3px 0 0;
    background: linear-gradient(90deg, #fbfbfd, #e8e8ef 50%, #c6c6d2);
}
.toolbar.vertical + .vertical {
    padding-top: 8px;
}
.vertical::before {
    left: 5px;
    top: 3px;
    width: 14px;
    height: 2px;
    background: repeating-linear-gradient(90deg, #a5a5ae 0 2px, transparent 2px 4px);
}
.vertical .tools {
    flex-direction: column;
}
.vertical .tool {
    width: 24px;
    padding-right: 0;
}
.vertical .sep {
    width: 18px;
    height: 8px;
    background: linear-gradient(transparent 3px, #c6c6ce 3px 4px, #fff 4px 5px, transparent 5px);
}
.vertical .endcap {
    align-self: stretch;
    width: auto;
    height: 14px;
    margin: 0;
    background: linear-gradient(90deg, #d9d9e0, #f4f4f8);
}
.vertical .endcap::after {
    left: auto;
    right: 2px;
    bottom: 4px;
    transform: rotate(-90deg);
}
.center {
    flex: 1;
    display: flex;
    flex-direction: column;
    min-width: 0;
}
.content {
    flex: 1;
    display: flex;
    min-height: 0;
    background: #eeeef6;
}

/* project explorer */
.explorer {
    display: flex;
    flex-direction: column;
    width: 140px;
    margin: 2px 5px 1px 1px;
}
.panel-head {
    display: flex;
    align-items: center;
    height: 18px;
    padding: 0 2px 0 4px;
    background: #d3dce7;
    color: #4b5766;
}
.panel-head span {
    flex: 1;
    white-space: nowrap;
}
.panel-head button {
    width: 17px;
    height: 16px;
}
.panel-head svg {
    width: 10px;
    height: 10px;
    fill: #111;
}
.folders {
    height: 250px;
    padding-top: 1px;
    border: 1px solid #8c9099;
    background: #fff;
    font-size: 12px;
}
.folders li {
    display: flex;
    align-items: center;
    gap: 5px;
    height: 18px;
    padding-left: 4px;
}
.folders svg {
    width: 16px;
    height: 14px;
}
.folders .child {
    position: relative;
    padding-left: 23px;
    gap: 1px;
    font-size: 11px;
}
.folders .child::before {
    content: "";
    position: absolute;
    left: 12px;
    top: 0;
    width: 10px;
    height: 10px;
    border: dotted #999;
    border-width: 0 0 1px 1px;
}
.folders .child span {
    padding: 0 3px;
    border: 1px solid #dedede;
    background: #f2f2f2;
}
.files {
    flex: 1;
    display: flex;
    flex-direction: column;
    margin-top: 3px;
    border: 1px solid #8c9099;
    background: #fff;
}
.files-head {
    position: relative;
    height: 24px;
    padding: 5px 0 0 35px;
    border-bottom: 1px solid #d5d5d5;
    background: linear-gradient(#fff, #f1f2f4);
    font-size: 12px;
}
.files-head::before {
    content: "";
    position: absolute;
    left: 12px;
    top: 11px;
    border: 4px solid transparent;
    border-bottom: 4px solid #888;
    border-top: none;
}
.files ul {
    flex: 1;
    padding: 1px 0 0 5px;
}
.files li {
    display: flex;
    align-items: center;
    gap: 2px;
    height: 19px;
    white-space: nowrap;
}
.files li svg, .ghost {
    flex: none;
    width: 16px;
    height: 16px;
}
.ghost {
    border: 1px dotted #444;
    background: repeating-conic-gradient(#9cc 0 25%, #fff 0 50%) 0 0 / 2px 2px;
}
.scroll {
    display: flex;
    height: 17px;
    background: #f0f0f0;
}
.scroll button {
    width: 18px;
    line-height: 15px;
}
.scroll i {
    width: 15px;
    height: 15px;
    margin: 1px auto 1px 1px;
    border: 1px solid #999;
    border-radius: 2px;
    background: linear-gradient(#f6f6f6, #ddd);
}

/* document area */
.mdi {
    flex: 1;
    position: relative;
    overflow: hidden;
    margin-bottom: 2px;
    border: solid #6e6e6e;
    border-width: 2px 0 0 1px;
    background: #a9a9a9;
}
.window {
    position: absolute;
    padding: 0 8px 8px;
    border: 1px solid #1c2b3a;
    border-radius: 6px 6px 0 0;
    background: linear-gradient(#b8cbe2, #c3d0e6 100px, #b5d8ea 160px);
    box-shadow: inset 0 0 0 1px #e3eefa;
}
.plot-window {
    left: 4px;
    top: 38px;
    width: 487px;
    padding-left: 7px;
}
.digitizer {
    left: 493px;
    top: 35px;
    width: 531px;
    padding-left: 7px;
    padding-right: 7px;
}
.window header {
    display: flex;
    align-items: center;
    gap: 4px;
    height: 29px;
    margin: 0 -8px 0 -7px;
    padding: 5px 9px 0;
    border-radius: 6px 6px 0 0;
    background: linear-gradient(#c9d5e6, #a6bad6 60%, #b4c5dd);
    box-shadow: inset 0 1px 0 #eef4fb;
}
.window.digitizer header {
    height: 28px;
    margin-right: -7px;
}
.window h2 {
    flex: 1;
    color: #151f30;
}
.win-icon {
    width: 16px;
    height: 16px;
}
.plot {
    position: relative;
    display: flex;
    border: 1px solid #fff;
    border-top-color: #5d6674;
    border-left-color: #5d6674;
    background: #c0c0c0;
}
.plot > svg:first-child {
    flex: none;
    width: 451px;
    height: 354px;
    background: #fff;
    fill: none;
}
.plot text {
    fill: #111;
    font: 13px "Liberation Sans", sans-serif;
}
.ticks text {
    text-anchor: end;
}
.ticks.mid text, .plot .title {
    text-anchor: middle;
}
.plot .title {
    font-size: 16px;
}
.axis {
    stroke: #000;
    stroke-width: 1px;
    shape-rendering: crispEdges;
}
.thick {
    stroke-width: 2px;
}
.black {
    stroke: #222;
    stroke-width: 1.5px;
}
.blue {
    stroke: #5a5aa0;
}
.red, .beads {
    stroke: #c22b35;
}
.beads {
    stroke-width: 3px;
    stroke-linecap: round;
    stroke-dasharray: 0 8;
}
.guide {
    stroke: #111;
    stroke-dasharray: 2 2;
    shape-rendering: crispEdges;
}
.peg-r {
    fill: #b5202a;
    stroke: #300;
}
.peg-b {
    fill: #1b1b80;
    stroke: #003;
}
.cursor {
    position: absolute;
    left: 37px;
    top: 58px;
    width: 14px;
    height: 22px;
}

/* digitizer dialog */
.dialog {
    background: #f0f0f0;
}
.dialog-menu {
    display: flex;
    gap: 14px;
    height: 20px;
    padding-left: 7px;
    border-bottom: 1px solid #cdd3e4;
    background: linear-gradient(#fafbff, #dde2f2);
}
.dialog-tools {
    display: flex;
    gap: 15px;
    padding: 7px 9px 10px;
}
.dialog-tools .tool {
    width: 24px;
    height: 24px;
    border: solid;
    border-width: 1px 2px 2px 1px;
    border-color: #fff #888 #888 #fff;
}
.dialog-tools .tools:last-child {
    margin-left: -5px;
}
.dialog-tools .tools:first-child .tool:nth-child(-n+2), .dialog-tools .tools:last-child .tool {
    border: 1px solid #777;
    border-radius: 3px;
    background: linear-gradient(#fafafa, #dcdcdc);
}
.tabs {
    display: flex;
    align-items: flex-end;
    height: 18px;
    margin: 0 10px;
}
.tabs button {
    height: 16px;
    padding: 0 5px;
    border: 1px solid #999;
    border-bottom: none;
    background: #ececec;
    color: #777;
}
.tabs .active {
    height: 18px;
    padding: 0 6px;
    border-left: none;
    background: #fff;
    color: #111;
}
.tabpage {
    margin: 0 8px 7px 9px;
    padding: 10px 9px 10px;
    border: 1px solid #b9b9b9;
    border-left-color: #dcdcdc;
    border-top-color: #fafafa;
}
.grid {
    height: 49px;
    margin-right: 3px;
    padding: 3px 0 0 2px;
    border-top: 1px solid #444;
    background: #6f6f6f;
}
.grid table {
    width: 460px;
    table-layout: fixed;
    border-collapse: separate;
    border-spacing: 0;
    font-size: 11px;
    line-height: 17px;
}
.c1 {
    width: 42px;
}
.c2 {
    width: 85px;
}
.c3 {
    width: 118px;
}
.c4 {
    width: 157px;
}
.c5 {
    width: 58px;
}
.grid th {
    height: 17px;
    padding: 0;
    border-right: 1px solid #999;
    background: #f0f0f0;
    font-weight: normal;
    white-space: nowrap;
}
.grid td {
    height: 20px;
    padding: 0;
    border: solid #fff;
    border-width: 0 1px 1px 0;
    background: #3096f8;
    color: #fff;
    text-align: center;
}
.grid .focus {
    border: 1px dotted #fff;
}
.cell {
    position: relative;
    display: block;
    padding-right: 17px;
}
.cell select {
    width: 100%;
    height: 18px;
    appearance: none;
    text-align: center;
    text-align-last: center;
}
.cell::before {
    content: "";
    position: absolute;
    right: 1px;
    top: 2px;
    width: 14px;
    height: 15px;
    border: 1px solid #8ca0b4;
    background: #e3edf5;
}
.cell::after {
    content: "";
    position: absolute;
    right: 4px;
    top: 8px;
    border: 4px solid transparent;
    border-top-color: #111;
    border-bottom: none;
}
.lupe {
    display: block;
    margin: 8px 0 6px;
}
.preview {
    display: flex;
    align-items: stretch;
    gap: 9px;
}
.preview svg {
    flex: none;
    width: 447px;
    height: 221px;
    shape-rendering: crispEdges;
}
.preview input {
    appearance: none;
    writing-mode: vertical-lr;
    direction: rtl;
    width: 22px;
    height: 206px;
    margin-top: 7px;
    background: linear-gradient(90deg, transparent 10px, #b5b5b5 10px 11px, #fff 11px 12px, transparent 12px);
}
.preview input::-webkit-slider-thumb {
    appearance: none;
    width: 21px;
    height: 11px;
    border: 1px solid #777;
    border-radius: 2px;
    background: linear-gradient(#fff, #e3e3e3);
}

/* bottom rows */
.bottom {
    margin-left: 1px;
}
.bottom .toolbar:first-child {
    padding-left: 11px;
}
.blackout {
    width: 363px;
    background: #000;
}
.nogrip {
    flex: 1;
    padding-left: 10px;
}
.status {
    display: flex;
    align-items: center;
    gap: 6px;
    height: 20px;
    padding-right: 3px;
    border-top: 1px solid #a9a9b4;
    background: #f0efee;
}
.status .mid {
    margin-left: 830px;
}
.status .last {
    margin-left: auto;
}
.status i {
    width: 8px;
    height: 8px;
    background: radial-gradient(#b5b5b5 1px, transparent 1px) 0 0 / 4px 4px;
}
```
